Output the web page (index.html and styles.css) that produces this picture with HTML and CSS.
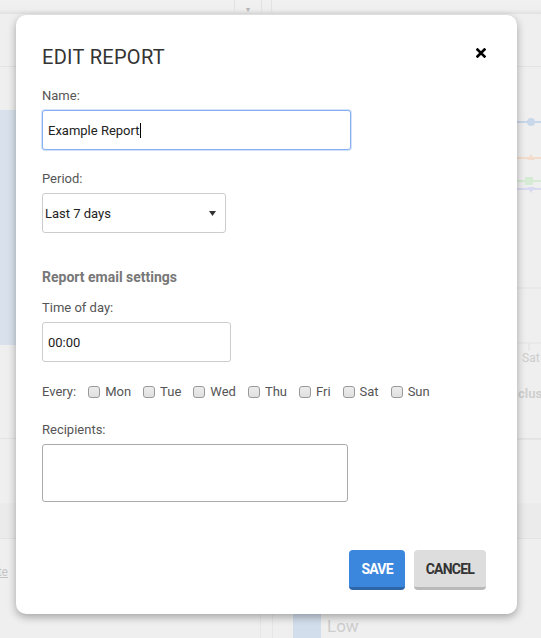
FILE: index.html
```
<!DOCTYPE html>
<html lang="en">
<head>
<meta charset="utf-8">
<title>Edit Report</title>
<link rel="stylesheet" href="styles.css">
</head>
<body>
<div class="app" aria-hidden="true">
  <div class="topbar">
    <div class="tb-cell tb-main"></div>
    <div class="tb-cell tb-drop">▼</div>
    <div class="tb-cell tb-sep"></div>
    <div class="tb-cell tb-rest"></div>
  </div>
  <div class="panes">
    <div class="pane pane-left">
      <div class="p-head"></div>
      <div class="pl-gap1"></div>
      <div class="pl-block"></div>
      <div class="pl-gap2"></div>
      <div class="pl-gap3"></div>
      <div class="p-band"></div>
      <div class="pl-link"><span>Example site</span></div>
    </div>
    <div class="gutter"></div>
    <div class="pane pane-right">
      <div class="p-head"></div>
      <svg class="chart" width="269" height="332" viewBox="0 0 269 332">
        <line x1="0" y1="53" x2="269" y2="53" stroke="#c9d7ea" stroke-width="2"/>
        <circle cx="258" cy="53" r="4" fill="#c9d7ea"/>
        <line x1="0" y1="89" x2="269" y2="89" stroke="#f3dccb" stroke-width="2"/>
        <path d="M258 85 L262 91 L254 91 Z" fill="#f3dccb"/>
        <line x1="0" y1="112" x2="269" y2="112" stroke="#d5ebd3" stroke-width="2"/>
        <rect x="252" y="108" width="8" height="8" fill="#d5ebd3"/>
        <line x1="0" y1="120" x2="269" y2="120" stroke="#d9d9f0" stroke-width="2"/>
        <path d="M254 118 L262 118 L258 124 Z" fill="#d9d9f0"/>
        <line x1="0" y1="219" x2="269" y2="219" stroke="#e3e3e3" stroke-width="1"/>
        <line x1="0" y1="274" x2="269" y2="274" stroke="#e3e3e3" stroke-width="1"/>
        <line x1="256" y1="274" x2="256" y2="282" stroke="#e0e0e0" stroke-width="1"/>
        <text x="249" y="293" class="chart-axis">Sat</text>
        <text x="245" y="329" class="chart-title">clusters</text>
      </svg>
      <div class="pr-gap"></div>
      <div class="pr-lines"></div>
      <div class="p-band"></div>
      <div class="pr-gap2"></div>
      <div class="legend"><span class="legend-swatch"></span><span class="legend-text">Low</span></div>
    </div>
  </div>
</div>

<div class="modal" role="dialog" aria-labelledby="modal-title">
  <div class="modal-header">
    <h2 class="modal-title" id="modal-title">EDIT REPORT</h2>
    <svg class="close" width="10" height="10" viewBox="0 0 10 10" aria-label="Close">
      <path d="M1.6 1.6 L8.4 8.4 M8.4 1.6 L1.6 8.4" stroke="#000" stroke-width="2.7" stroke-linecap="square"/>
    </svg>
  </div>

  <div class="field">
    <label class="label">Name:</label>
    <div class="input input-name input-focused"><span>Example Report</span><span class="caret"></span></div>
  </div>

  <div class="field field-period">
    <label class="label">Period:</label>
    <div class="select-wrap">
      <select class="input select">
        <option>Last 7 days</option>
      </select>
      <svg class="select-arrow" width="7" height="5" viewBox="0 0 7 5"><path d="M0 0 L7 0 L3.5 5 Z" fill="#333"/></svg>
    </div>
  </div>

  <h3 class="section-title">Report email settings</h3>

  <div class="field field-time">
    <label class="label">Time of day:</label>
    <input class="input input-time" type="text" value="00:00">
  </div>

  <div class="days">
    <span class="days-label">Every:</span>
    <label class="day"><input type="checkbox" class="cb"><span>Mon</span></label>
    <label class="day"><input type="checkbox" class="cb"><span>Tue</span></label>
    <label class="day"><input type="checkbox" class="cb"><span>Wed</span></label>
    <label class="day"><input type="checkbox" class="cb"><span>Thu</span></label>
    <label class="day"><input type="checkbox" class="cb"><span>Fri</span></label>
    <label class="day"><input type="checkbox" class="cb"><span>Sat</span></label>
    <label class="day"><input type="checkbox" class="cb"><span>Sun</span></label>
  </div>

  <div class="field field-recipients">
    <label class="label">Recipients:</label>
    <textarea class="input textarea"></textarea>
  </div>

  <div class="actions">
    <button class="btn btn-primary">SAVE</button>
    <button class="btn btn-default">CANCEL</button>
  </div>
</div>
</body>
</html>
```
FILE: styles.css
```
* { box-sizing: border-box; }

html, body {
  margin: 0;
  padding: 0;
}

body {
  width: 541px;
  height: 638px;
  overflow: hidden;
  position: relative;
  background: #efefef;
  font-family: Roboto, "Noto Sans", "Liberation Sans", sans-serif;
}

/* ---------- background application (faded behind modal) ---------- */
.app {
  height: 638px;
  display: flex;
  flex-direction: column;
}

.topbar {
  height: 14px;
  flex: none;
  display: flex;
  background: linear-gradient(#f1f1f1, #eeeeee 70%, #e0e0e0);
}

.tb-cell { height: 14px; border-right: 1px solid #e2e2e2; }
.tb-main { width: 235px; }
.tb-drop {
  width: 27px;
  font-size: 7px;
  color: #b5b5b5;
  text-align: center;
  line-height: 20px;
}
.tb-sep { width: 10px; }
.tb-rest { flex: 1; border-right: none; }

.panes {
  flex: 1;
  display: grid;
  grid-template-columns: 261px 11px 1fr;
}

.pane { display: flex; flex-direction: column; }
.pane-left { border-right: 1px solid #e6e6e6; }
.pane-right { border-left: 1px solid #e6e6e6; }

.p-head { height: 53px; border-bottom: 1px solid #e3e3e3; flex: none; }
.pl-gap1 { height: 43px; }
.pl-block { height: 235px; background: #d9e2ec; }
.pl-gap2 { height: 94px; border-bottom: 1px solid #e3e3e3; }
.pl-gap3 { height: 64px; }
.p-band { height: 36px; background: #ebebeb; border-bottom: 1px solid #e3e3e3; }
.pl-link {
  margin-top: 26px;
  font-size: 12px;
  color: #c4c4c4;
  display: flex;
  justify-content: flex-end;
  margin-left: -300px;
  width: 308px;
}
.pl-link span { text-decoration: underline; }

.chart { display: block; flex: none; margin-top: 2px; }
.chart-axis { font-family: Roboto, sans-serif; font-size: 12px; fill: #cccccc; }
.chart-title { font-family: Roboto, sans-serif; font-size: 13px; font-weight: 700; fill: #cfcfcf; }

.pr-gap { height: 38px; border-bottom: 1px solid #e3e3e3; }
.pr-lines { height: 64px; box-shadow: inset 0 10px 0 -9px #e6e6e6; }
.pr-gap2 { height: 73px; }

.legend { display: flex; align-items: flex-start; padding-left: 20px; gap: 6px; }
.legend-swatch { width: 28px; height: 30px; background: #d2deec; }
.legend-text { font-size: 17px; color: #cdcdcd; line-height: 22px; margin-top: 3px; }

/* ---------- modal ---------- */
.modal {
  position: absolute;
  left: 16px;
  top: 15px;
  width: 501px;
  height: 599px;
  background: #fff;
  border-radius: 10px;
  box-shadow: 0 3px 8px rgba(0, 0, 0, 0.32);
  padding: 30px 31px 24px 26px;
  display: flex;
  flex-direction: column;
}

.modal-header {
  display: flex;
  justify-content: space-between;
  align-items: flex-start;
  margin-bottom: 19px;
}

.modal-title {
  margin: 0;
  font-size: 20px;
  font-weight: 400;
  line-height: 24px;
  letter-spacing: 0.3px;
  color: #333;
}

.close { display: block; margin-top: 3px; }

.label {
  display: block;
  font-size: 13px;
  line-height: 16px;
  color: #555;
  margin-bottom: 6px;
}

.field { margin-bottom: 21px; }
.field-period { margin-bottom: 36px; }
.field-time { margin-bottom: 22px; }
.field-recipients { margin-bottom: 0; }

.input {
  display: block;
  height: 40px;
  border: 1px solid #cccccc;
  border-radius: 3px;
  padding: 0 5px;
  font-family: Roboto, "Noto Sans", sans-serif;
  font-size: 13px;
  color: #222;
  background: #fff;
  outline: none;
}

.input-name {
  width: 309px;
  display: flex;
  align-items: center;
}

.input-focused {
  border-color: #86aef0;
  box-shadow: 0 0 0 1px rgba(134, 174, 240, 0.35);
}

.caret {
  display: inline-block;
  width: 1px;
  height: 15px;
  background: #000;
  margin-left: 1px;
}

.select-wrap { position: relative; width: 184px; }

.select {
  width: 184px;
  -webkit-appearance: none;
  appearance: none;
  padding-left: 2px;
  border-color: #cccccc;
}

.select-arrow {
  position: absolute;
  right: 10px;
  top: 18px;
}

.section-title {
  margin: 0 0 15px;
  font-size: 14px;
  line-height: 16px;
  font-weight: 700;
  color: #777;
}

.input-time { width: 189px; }

.days {
  display: flex;
  align-items: center;
  gap: 12px;
  font-size: 13px;
  line-height: 16px;
  color: #555;
  margin-bottom: 22px;
}

.day {
  display: flex;
  align-items: center;
  gap: 5px;
}

.cb {
  -webkit-appearance: none;
  appearance: none;
  width: 12px;
  height: 12px;
  margin: 0;
  border: 1px solid #9a9a9a;
  border-radius: 3px;
  background: linear-gradient(#ececec, #e0e0e0);
}

.textarea {
  width: 306px;
  height: 58px;
  border-color: #aaaaaa;
  resize: none;
}

.actions {
  margin-top: auto;
  display: flex;
  justify-content: flex-end;
  gap: 9px;
}

.btn {
  height: 40px;
  padding: 0 12px;
  border: none;
  border-radius: 4px;
  font-family: Roboto, "Noto Sans", sans-serif;
  font-size: 14px;
  font-weight: 700;
  letter-spacing: -0.8px;
  cursor: pointer;
}

.btn-primary {
  background: #3b87dd;
  color: #fff;
  border-bottom: 3px solid #2c66a8;
}

.btn-default {
  background: #dddddd;
  color: #333;
  border-bottom: 3px solid #b9b9b9;
}
```
